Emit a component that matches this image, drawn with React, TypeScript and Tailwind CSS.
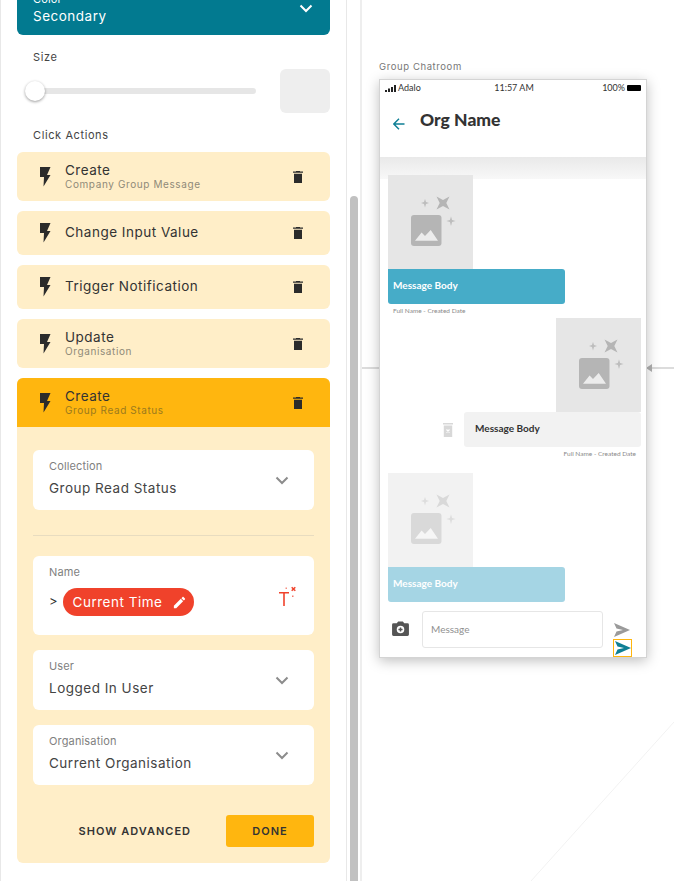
import React from "react";

function Bolt() {
  return (
    <svg width="12" height="20" viewBox="0 0 12 20" className="shrink-0 text-[#2b2b2b]">
      <polygon points="1,0 11.5,0 8,8 11.5,8 4.5,19.500 5,10 1,10" fill="currentColor" />
    </svg>
  );
}

function Trash() {
  return (
    <svg width="10" height="12" viewBox="0 0 10 12" className="shrink-0 text-[#2b2b2b]">
      <path d="M3 0h4v.6h3v1.100H0V.6h3zM1 2.800h8V12H1z" fill="currentColor" />
    </svg>
  );
}

function Chevron({ className }: { className: string }) {
  return (
    <svg width="14" height="9" viewBox="0 0 14 9" fill="none" className={className}>
      <path d="M1.500 1.500L7 7l5.500-5.500" stroke="currentColor" strokeWidth="2" />
    </svg>
  );
}

function ActionRow({ title, sub, active }: { title: string; sub?: string; active?: boolean }) {
  return (
    <div
      className={`flex items-center pl-[22px] pr-[27px] ${sub ? "h-[49px]" : "h-[44px]"} ${
        active ? "bg-[#ffb60f] rounded-t-[6px]" : "bg-[#ffeec8] rounded-[6px]"
      }`}
    >
      <Bolt />
      <div className="ml-[14px] flex-1 min-w-0 -mt-[1px]">
        <div className="text-[13.500px] leading-[15px] tracking-[0.5px] text-[#333]">{title}</div>
        {sub && <div className={`text-[10px] leading-[12px] tracking-[0.6px] ${active ? "text-[#9b7a1e]" : "text-[#8f8a78]"}`}>{sub}</div>}
      </div>
      <Trash />
    </div>
  );
}

function SelectField({ label, value }: { label: string; value: string }) {
  return (
    <div className="h-[60px] bg-white rounded-[6px] pl-4 pr-[25px] flex items-center">
      <div className="flex-1 min-w-0 pb-[6px]">
        <div className="text-[11px] leading-[14px] tracking-[0.15px] text-[#7f7f7f]">{label}</div>
        <div className="mt-[7px] text-[13.500px] leading-[16px] tracking-[0.5px] text-[#444]">{value}</div>
      </div>
      <Chevron className="text-[#8c8c8c]" />
    </div>
  );
}

function Placeholder({ bg, fg }: { bg: string; fg: string }) {
  return (
    <div className={`w-[85px] h-[94px] ${bg}`}>
      <svg width="85" height="94" viewBox="0 0 85 94" className={fg}>
        <rect x="23" y="40" width="30.500" height="31" rx="3" fill="currentColor" />
        <path d="M27 65.700L33.600 57.600 37 61 42.700 55 50 65.700z" fill="#fff" fillOpacity="0.75" />
        <path d="M48.500 21.500L55 25 61.500 21.500 58.300 28 61.500 34.500 55 31 48.500 34.500 51.700 28z" fill="currentColor" />
        <path d="M37 24l1 3 3 1-3 1-1 3.500-1-3.500-3-1 3-1z" fill="currentColor" fillOpacity="0.85" />
        <path d="M63 41.500l1.100 3.400 3.400 1.100-3.400 1.100-1.100 3.900-1.100-3.900-3.400-1.100 3.400-1.100z" fill="currentColor" fillOpacity="0.85" />
      </svg>
    </div>
  );
}

function Send({ className }: { className: string }) {
  return (
    <svg width="16" height="14" viewBox="0 0 16 14" className={className}>
      <path d="M0 0l16 7-16 7 2.500-5.500L9 7 2.500 5.500z" fill="currentColor" />
    </svg>
  );
}

function Phone() {
  return (
    <div className="w-[268px] h-[579px] bg-white border border-[#d4d4d4] shadow-[0_3px_12px_rgba(0,0,0,0.25)] font-['Lato',sans-serif] overflow-hidden flex flex-col">
      <div className="h-[14px] mt-[1px] pl-[5px] pr-[3px] flex items-center justify-between text-[9px] text-[#333]">
        <div className="flex items-center gap-[2px] w-[90px]">
          <svg width="11" height="7" viewBox="0 0 11 7" className="text-[#222]">
            <path d="M0 5h2v2H0zM3 3.500h2V7H3zM6 2h2v5H6zM9 0h2v7H9z" fill="currentColor" />
          </svg>
          <span>Adalo</span>
        </div>
        <span>11:57 AM</span>
        <div className="flex items-center justify-end gap-[2px] w-[90px]">
          <span>100%</span>
          <span className="w-[14px] h-[6px] bg-black rounded-[1px] mr-[2px]" />
        </div>
      </div>
      <div className="h-[62px] relative z-10 shrink-0 flex items-start pl-[13px] pt-[14px] bg-white">
        <svg width="12" height="12" viewBox="0 0 12 12" fill="none" className="mt-[9px] text-[#0e7f95]">
          <path d="M11.500 6H1M6 .8L.8 6 6 11.200" stroke="currentColor" strokeWidth="1.400" />
        </svg>
        <span className="ml-[15px] mt-[1px] text-[17.500px] leading-[20px] font-black text-[#333]">Org Name</span>
      </div>
      <div className="h-[22px] shrink-0 bg-gradient-to-b from-[#e9e9e9] to-[#f8f8f8]" />
      <div className="-mt-[4px] relative flex-1 flex flex-col pl-[8px] pr-[5px]">
        <Placeholder bg="bg-[#e6e6e6]" fg="text-[#b5b5b5]" />
        <div className="w-[177px] h-[35px] bg-[#46acc8] rounded-b-[3px] rounded-tr-[3px] pl-[5px] flex items-center text-[10px] font-bold text-white">
          <span className="-mt-[3px]">Message Body</span>
        </div>
        <div className="mt-[3px] pl-[5px] text-[6.500px] leading-[8px] text-[#8a8a8a]">Full Name - Created Date</div>
        <div className="mt-[3px] flex justify-end"><Placeholder bg="bg-[#e6e6e6]" fg="text-[#b5b5b5]" /></div>
        <div className="flex justify-end items-center">
          <svg width="10" height="14" viewBox="0 0 10 14" className="mr-[11px] text-[#d8d8d8]">
            <path d="M0 0h10v1.500H0zM.8 2.500h8.400V14H.8z" fill="currentColor" />
            <path d="M3.500 6.500l3 3M6.500 6.500l-3 3" stroke="#fff" strokeWidth="1.200" />
          </svg>
          <div className="w-[177px] h-[35px] bg-[#f2f2f2] rounded-[3px] pl-[11px] flex items-center text-[10px] font-bold text-[#333]">
            <span className="-mt-[3px]">Message Body</span>
          </div>
        </div>
        <div className="mt-[3px] pr-[5px] text-right text-[6.500px] leading-[8px] text-[#8a8a8a]">Full Name - Created Date</div>
        <div className="mt-[15px]"><Placeholder bg="bg-[#f2f2f2]" fg="text-[#d9d9d9]" /></div>
        <div className="w-[177px] h-[35px] bg-[#a5d5e4] rounded-b-[3px] rounded-tr-[3px] pl-[5px] flex items-center text-[10px] font-bold text-white">
          <span className="-mt-[3px]">Message Body</span>
        </div>
        <div className="mt-[9px] flex items-start">
          <svg width="17" height="15" viewBox="0 0 18 16" className="ml-[4px] mt-[10px] text-[#555]">
            <path d="M1.500 2.500H5L6.500.5h5L13 2.500h3.500A1.500 1.500 0 0 1 18 4v10.500a1.500 1.500 0 0 1-1.500 1.500h-15A1.500 1.500 0 0 1 0 14.500V4a1.500 1.500 0 0 1 1.500-1.500z" fill="currentColor" />
            <circle cx="9" cy="9" r="4" fill="#fff" />
            <path d="M8.200 6.800h1.600v1.400h1.400v1.600H9.800v1.400H8.200V9.800H6.800V8.200h1.400z" fill="currentColor" />
          </svg>
          <div className="ml-[13px] w-[181px] h-[37px] border border-[#e6e6e6] rounded-[3px] flex items-center pl-[8px] text-[10px] text-[#909090]">Message</div>
          <div className="relative ml-[10px] h-[46px] w-[19px]">
            <Send className="absolute left-[1px] top-[12px] text-[#9a9a9a]" />
            <div className="absolute left-0 top-[28px] w-[19px] h-[18px] border border-[#ffb60f] flex items-center justify-center">
              <Send className="text-[#0e7f95]" />
            </div>
          </div>
        </div>
      </div>
    </div>
  );
}

export default function App() {
  return (
    <div className="w-[674px] h-[881px] flex overflow-hidden bg-white font-['Inter',sans-serif]">
      <div className="w-[347px] h-[881px] shrink-0 border-l border-r border-[#e8e8e8] overflow-hidden pl-[16px] pr-[16px]">
        <div className="-mt-[15px] h-[50px] bg-[#027a90] rounded-[6px] pl-4 pr-[17px] flex items-center text-white">
          <div className="flex-1 -mt-[3px]">
            <div className="text-[11px] leading-[14px] tracking-[0.15px]">Color</div>
            <div className="text-[13.500px] leading-[18px] mt-[1px] tracking-[0.5px]">Secondary</div>
          </div>
          <Chevron className="text-white -mt-[3px]" />
        </div>
        <div className="mt-[15px] pl-4 text-[11px] leading-[14px] tracking-[0.6px] text-[#444]">Size</div>
        <div className="mt-[5px] flex items-center h-[44px]">
          <div className="relative ml-[9px] w-[230px] h-[6px] bg-[#e6e6e6] rounded-full">
            <div className="absolute -left-[1px] -top-[7px] w-[20px] h-[20px] rounded-full bg-white shadow-[0_1px_3px_rgba(0,0,0,0.4)]" />
          </div>
          <div className="ml-auto w-[50px] h-[44px] bg-[#eeeeee] rounded-[6px]" />
        </div>
        <div className="mt-[15px] pl-4 text-[11px] leading-[14px] tracking-[0.6px] text-[#444]">Click Actions</div>
        <div className="mt-[10px] flex flex-col gap-[10px]">
          <ActionRow title="Create" sub="Company Group Message" />
          <ActionRow title="Change Input Value" />
          <ActionRow title="Trigger Notification" />
          <ActionRow title="Update" sub="Organisation" />
          <div className="bg-[#ffeec8] rounded-[6px]">
            <ActionRow title="Create" sub="Group Read Status" active />
            <div className="px-4 pt-[23px] pb-4">
              <SelectField label="Collection" value="Group Read Status" />
              <div className="mt-[25px] border-t border-[#e8dcc0]" />
              <div className="mt-[20px] h-[79px] bg-white rounded-[6px] pl-4 pr-[17px] pt-[9px]">
                <div className="text-[11px] leading-[14px] tracking-[0.15px] text-[#7f7f7f]">Name</div>
                <div className="mt-[9px] flex items-center">
                  <span className="text-[13px] text-[#333] mr-[5px]">&gt;</span>
                  <div className="h-[28px] w-[131px] rounded-full bg-[#f0422b] text-white flex items-center pl-[10px] text-[13.500px] tracking-[0.5px]">
                    <span className="w-[90px] shrink-0 whitespace-nowrap">Current Time</span>
                    <svg width="15" height="15" viewBox="0 0 24 24" className="ml-[9px]">
                      <path d="M3 17.250V21h3.750L17.810 9.940l-3.750-3.750L3 17.250zM20.710 7.040c.39-.39.39-1.020 0-1.410l-2.340-2.340c-.39-.39-1.020-.39-1.410 0l-1.830 1.830 3.750 3.750 1.830-1.830z" fill="currentColor" />
                    </svg>
                  </div>
                  <svg width="20" height="20" viewBox="0 0 20 20" className="ml-auto -mt-[12px] text-[#f0422b]">
                    <path d="M2 6h10v1.500H7.800V20H6.200V7.500H2z" fill="currentColor" />
                    <path d="M14.700 1.200l3.600 3.600m0-3.600l-3.600 3.600" stroke="currentColor" strokeWidth="1.500" />
                    <rect x="8.500" y="1.500" width="1.500" height="1.500" fill="currentColor" fillOpacity="0.6" />
                    <rect x="15" y="9.500" width="1.500" height="1.500" fill="currentColor" fillOpacity="0.7" />
                  </svg>
                </div>
              </div>
              <div className="mt-[15px]"><SelectField label="User" value="Logged In User" /></div>
              <div className="mt-[15px]"><SelectField label="Organisation" value="Current Organisation" /></div>
              <div className="mt-[30px] flex items-center justify-end">
                <span className="text-[11px] font-semibold tracking-[1px] text-[#333] mr-[35px]">SHOW ADVANCED</span>
                <div className="w-[88px] h-[32px] bg-[#ffb60f] rounded-[3px] flex items-center justify-center text-[11px] font-semibold tracking-[1px] text-[#333]">DONE</div>
              </div>
            </div>
          </div>
        </div>
      </div>
      <div className="w-[15px] h-[881px] shrink-0 border-r-2 border-[#eeeeee] relative">
        <div className="absolute left-[3px] top-[196px] w-[8px] h-[700px] bg-[#c1c1c1] rounded-t-[4px]" />
      </div>
      <div className="relative flex-1 bg-white">
        <div className="absolute left-0 w-[17px] top-[367px] h-[2px] bg-[#dcdcdc]" />
        <div className="absolute left-[290px] right-0 top-[367px] h-[2px] bg-[#dcdcdc]" />
        <div className="absolute left-[284px] top-[364px] w-0 h-0 border-y-[4px] border-y-transparent border-r-[6px] border-r-[#b0b0b0]" />
        <svg className="absolute right-0 top-[722px]" width="143" height="159" viewBox="0 0 143 159" fill="none">
          <path d="M143 0L0 159" stroke="#f2f2f2" strokeWidth="1" />
        </svg>
        <div className="absolute left-[17px] top-[60px] text-[9.500px] leading-[14px] tracking-[0.6px] text-[#777]">Group Chatroom</div>
        <div className="absolute left-[17px] top-[79px]"><Phone /></div>
      </div>
    </div>
  );
}
